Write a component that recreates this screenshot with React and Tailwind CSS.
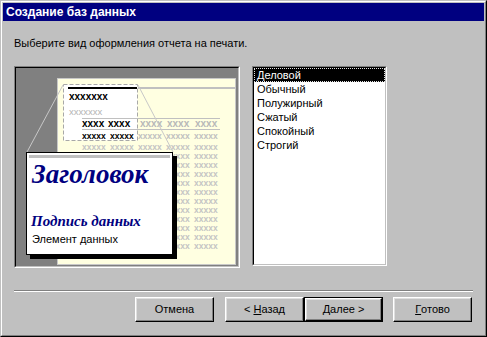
import React from 'react';

const items = ['Деловой', 'Обычный', 'Полужирный', 'Сжатый', 'Спокойный', 'Строгий'];

// gray "xxxxx" filler rows of the report preview
const rowYs = [147, 156, 165, 174, 183, 192, 201, 210, 219, 228, 237, 246];
const cols = [82, 110, 138, 166, 194];

// columns fully hidden behind the zoomed card are skipped
const visibleCols = (ry) => (ry > 150 ? cols.filter((cx) => cx >= 166) : cols);

const ReportPreview = () => (
  <svg width="222" height="198" viewBox="16 68 222 198" className="block">
    <rect x="16" y="68" width="222" height="198" fill="#808080" />
    {/* page */}
    <rect x="57.5" y="78.5" width="178" height="186" fill="#ffffe1" stroke="#c8c8c8" />
    {/* zoomed zone */}
    <rect x="63.5" y="84.5" width="74" height="56" fill="#ffffff" stroke="#a8a8a8" strokeDasharray="4 2" />
    <rect x="68" y="87" width="69" height="2" fill="#000000" />
    <rect x="138" y="87" width="97" height="2" fill="#c0c0c0" />
    <g fontFamily="'Liberation Sans', Arial, sans-serif">
      <text x="69" y="100" fontSize="10" fontWeight="bold" fill="#000">xxxxxxx</text>
      <text x="69" y="115" fontSize="9.5" fill="#b4b4b4">xxxxxxx</text>
      <rect x="82" y="118" width="138" height="1" fill="#c0c0c0" />
      <text x="82" y="127" fontSize="10" fontWeight="bold" fill="#000">xxxx</text>
      <text x="108" y="127" fontSize="10" fontWeight="bold" fill="#000">xxxx</text>
      <text x="140" y="127" fontSize="10" fontWeight="bold" fill="#b8b8b8">xxxx</text>
      <text x="167" y="127" fontSize="10" fontWeight="bold" fill="#b8b8b8">xxxx</text>
      <text x="195" y="127" fontSize="10" fontWeight="bold" fill="#b8b8b8">xxxx</text>
      <rect x="82" y="129" width="138" height="1" fill="#c0c0c0" />
      <text x="82" y="139" fontSize="8.5" fontWeight="bold" fill="#000">xxxxx</text>
      <text x="110" y="139" fontSize="8.5" fontWeight="bold" fill="#000">xxxxx</text>
      {cols.slice(2).map((cx) => (
        <text key={cx} x={cx} y="139" fontSize="8.5" fontWeight="bold" fill="#c0c0c0">xxxxx</text>
      ))}
      {rowYs.map((ry) =>
        visibleCols(ry).map((cx) => (
          <text key={`${ry}_${cx}`} x={cx} y={ry + 3} fontSize="8.5" fontWeight="bold" fill="#c4c4c4">xxxxx</text>
        ))
      )}
    </g>
    {/* zoom lines */}
    <line x1="63" y1="85" x2="27" y2="152" stroke="#c8c8c8" />
    <line x1="138" y1="85" x2="173" y2="152" stroke="#c8c8c8" />
    {/* zoomed card */}
    <rect x="30" y="156" width="147" height="103" fill="#000" />
    <rect x="26.5" y="152.5" width="146" height="102" fill="#fff" stroke="#000" />
    <rect x="29" y="155" width="141" height="3" fill="#c0c0c0" />
    <text x="32" y="183" fontFamily="'Liberation Serif', 'Times New Roman', serif" fontSize="27" fontWeight="bold" fontStyle="italic" fill="#000080">Заголовок</text>
    <text x="31" y="226" fontFamily="'Liberation Serif', 'Times New Roman', serif" fontSize="15" fontWeight="bold" fontStyle="italic" fill="#000080">Подпись данных</text>
    <text x="32" y="243" fontFamily="'Liberation Sans', Arial, sans-serif" fontSize="11" fill="#000">Элемент данных</text>
  </svg>
);

const Button = ({ children, isDefault }) => (
  <div className={`h-[25px] ${isDefault ? 'border border-black' : ''}`}>
    <div className={`h-full ${isDefault ? 'w-[77px]' : 'w-[79px]'} flex items-center justify-center whitespace-pre bg-[#c0c0c0] border border-t-white border-l-white border-r-black border-b-black shadow-[inset_-1px_-1px_#808080,inset_1px_1px_#dfdfdf] text-[11px] text-black`}>
      {children}
    </div>
  </div>
);

const App = () => {
  return (
    <div className="w-[487px] h-[337px] bg-[#c0c0c0] font-['Liberation_Sans',Arial,sans-serif] border border-t-[#c0c0c0] border-l-[#c0c0c0] border-r-black border-b-black">
      <div className="h-full border border-t-white border-l-white border-r-[#808080] border-b-[#808080] p-[1px]">
        {/* Title bar */}
        <div className="h-[18px] bg-[#000080] flex items-center pl-[3px]">
          <span className="text-white text-[12px] font-bold leading-none">Создание баз данных</span>
        </div>

        <div className="px-[11px]">
          <p className="mt-[16px] text-[11px] leading-[13px] text-black">Выберите вид оформления отчета на печати.</p>

          <div className="mt-[16px] flex gap-[12px] items-start">
            {/* Preview */}
            <div className="w-[226px] h-[202px] border border-t-[#808080] border-l-[#808080] border-r-white border-b-white">
              <div className="h-full border border-t-black border-l-black border-r-[#c0c0c0] border-b-[#c0c0c0]">
                <ReportPreview />
              </div>
            </div>

            {/* Style list */}
            <div className="w-[135px] h-[200px] border border-t-[#808080] border-l-[#808080] border-r-white border-b-white">
              <div className="h-full bg-white border border-t-black border-l-black border-r-[#c0c0c0] border-b-[#c0c0c0]">
                {items.map((it, i) => (
                  <div
                    key={it}
                    className={`h-[14px] pl-[2px] text-[11px] leading-[12px] ${i === 0 ? 'bg-black text-white border border-dotted border-[#e0e0e0]' : 'text-black border border-transparent'}`}
                  >
                    {it}
                  </div>
                ))}
              </div>
            </div>
          </div>

          {/* Separator */}
          <div className="mt-[22px] border-t border-t-[#808080] border-b border-b-white" />

          {/* Buttons */}
          <div className="mt-[5px] flex justify-end pr-[1px]">
            <Button>Отмена</Button>
            <div className="w-[11px]" />
            <Button>{'< '}<span className="underline">Н</span>азад</Button>
            <Button isDefault><span className="underline">Д</span>{'алее >'}</Button>
            <div className="w-[10px]" />
            <Button><span className="underline">Г</span>отово</Button>
          </div>
        </div>
      </div>
    </div>
  );
};

export default App;
